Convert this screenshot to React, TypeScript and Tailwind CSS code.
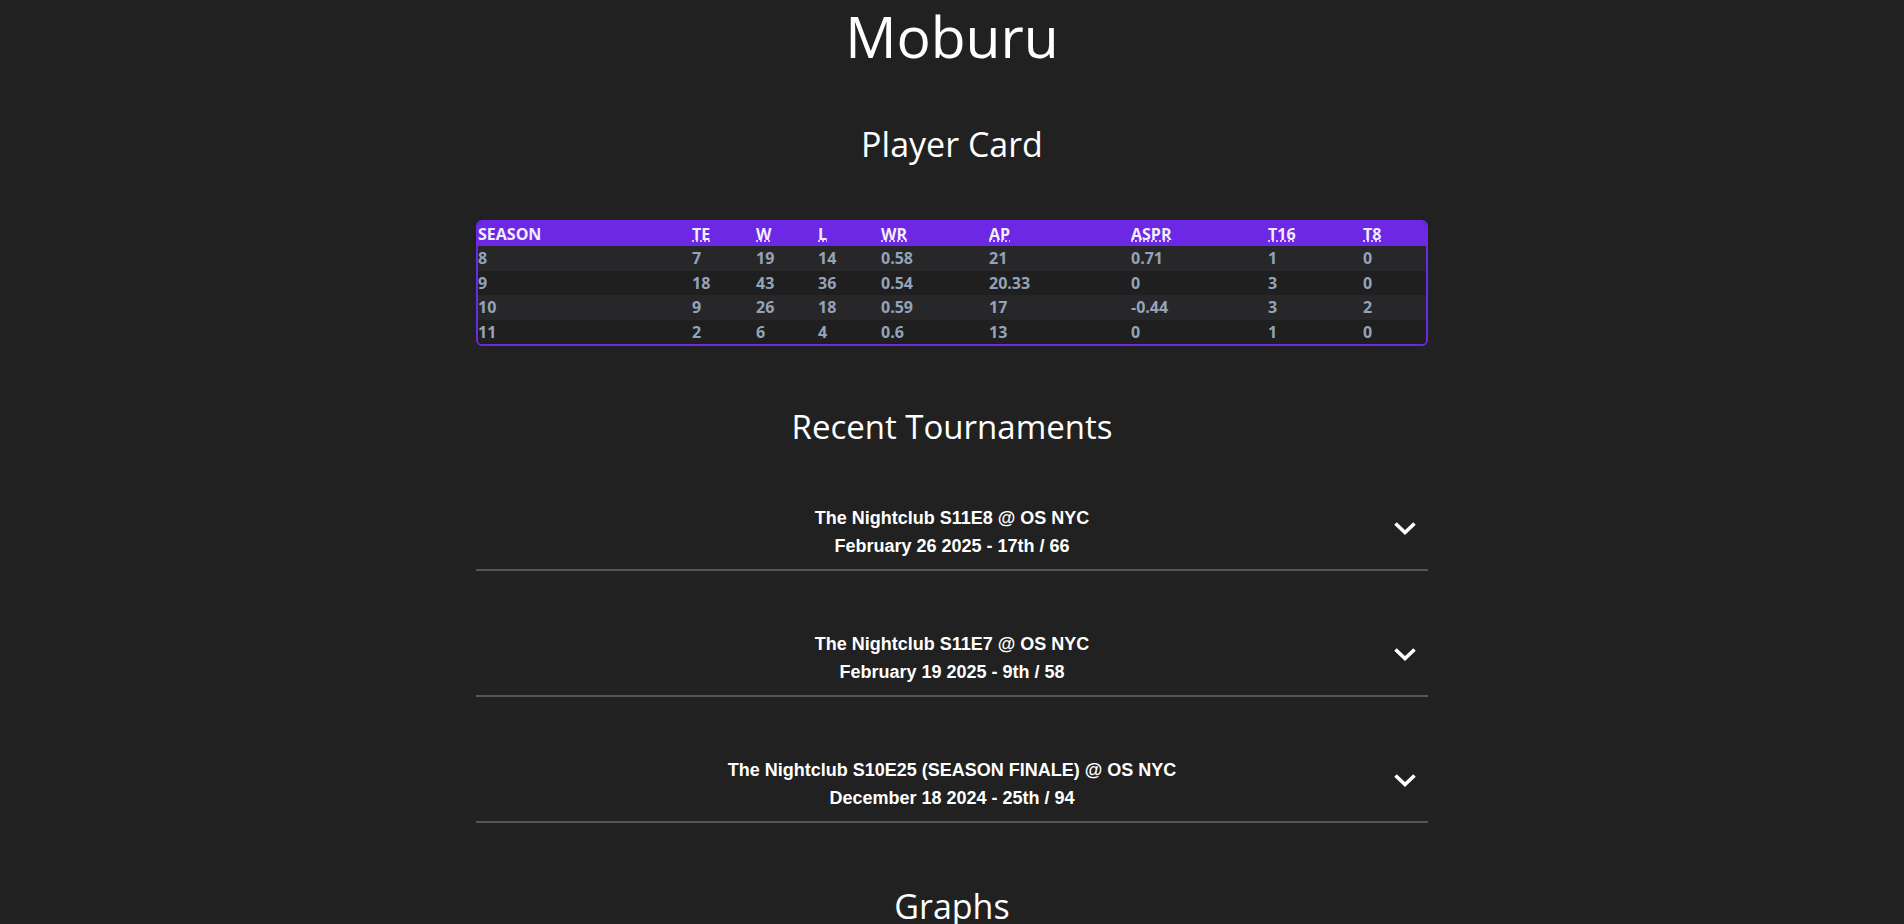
const seasons = [
  { season: "8", te: 7, w: 19, l: 14, wr: "0.58", ap: "21", aspr: "0.71", t16: 1, t8: 0 },
  { season: "9", te: 18, w: 43, l: 36, wr: "0.54", ap: "20.33", aspr: "0", t16: 3, t8: 0 },
  { season: "10", te: 9, w: 26, l: 18, wr: "0.59", ap: "17", aspr: "-0.44", t16: 3, t8: 2 },
  { season: "11", te: 2, w: 6, l: 4, wr: "0.6", ap: "13", aspr: "0", t16: 1, t8: 0 },
];

const columns = [
  { key: "season", label: "SEASON", width: "w-[214px]" },
  { key: "te", label: "TE", title: "Tournaments Entered", width: "w-[64px]" },
  { key: "w", label: "W", title: "Wins", width: "w-[62px]" },
  { key: "l", label: "L", title: "Losses", width: "w-[63px]" },
  { key: "wr", label: "WR", title: "Win Rate", width: "w-[108px]" },
  { key: "ap", label: "AP", title: "Average Placement", width: "w-[142px]" },
  { key: "aspr", label: "ASPR", title: "Average Seed Performance Rating", width: "w-[137px]" },
  { key: "t16", label: "T16", title: "Top 16s", width: "w-[95px]" },
  { key: "t8", label: "T8", title: "Top 8s", width: "w-[63px]" },
] as const;

const tournaments = [
  { name: "The Nightclub S11E8 @ OS NYC", result: "February 26 2025 - 17th / 66" },
  { name: "The Nightclub S11E7 @ OS NYC", result: "February 19 2025 - 9th / 58" },
  { name: "The Nightclub S10E25 (SEASON FINALE) @ OS NYC", result: "December 18 2024 - 25th / 94" },
];

const Chevron = () => (
  <svg width="24" height="14" viewBox="0 0 24 14" fill="none">
    <path d="M2.5 2.5 L12 11.5 L21.5 2.5" stroke="white" strokeWidth="3.6" strokeLinejoin="miter" />
  </svg>
);

const PlayerTable = () => (
  <div className="w-full rounded-md border-2 border-[#6d28e6] overflow-hidden">
    <table className="w-full table-fixed border-collapse font-['Open_Sans',sans-serif] text-[16px] font-bold">
      <thead>
        <tr className="bg-[#6d28e6] h-[24px] text-[#f1eefb]">
          {columns.map((c) => (
            <th key={c.key} className={`${c.width} p-0 text-left leading-none`}>
              {"title" in c ? <abbr title={c.title}>{c.label}</abbr> : c.label}
            </th>
          ))}
        </tr>
      </thead>
      <tbody>
        {seasons.map((s, i) => (
          <tr key={s.season} className={i % 2 === 0 ? "bg-[#27272a] h-[24.5px]" : "bg-[#1f1f1f] h-[24.5px]"}>
            {columns.map((c) => (
              <td key={c.key} className="p-0 text-left leading-none text-[#94a3b8]">
                {s[c.key]}
              </td>
            ))}
          </tr>
        ))}
      </tbody>
    </table>
  </div>
);

export default function App() {
  return (
    <div className="min-h-screen bg-[#212121] text-white font-['Open_Sans',sans-serif]">
      <div className="flex flex-col items-center">
        <h1 className="text-[57px] leading-[62px] font-normal mt-[5px]">Moburu</h1>
        <h2 className="text-[34px] leading-[40px] font-normal mt-[57px]">Player Card</h2>
        <div className="w-1/2 mt-[56px]">
          <PlayerTable />
        </div>
        <h2 className="text-[33px] leading-[40px] font-normal mt-[61px]">Recent Tournaments</h2>
        <div className="w-1/2 -mt-[2px]">
          {tournaments.map((t) => (
            <div key={t.name} className="flex items-center border-b-2 border-[#555555] pt-[63px] pb-[13px]">
              <div className="flex-1 flex flex-col items-center gap-[8px] font-['Liberation_Sans',Arial,sans-serif] font-bold text-[18px] leading-[20px] pl-[35px]">
                <span>{t.name}</span>
                <span>{t.result}</span>
              </div>
              <div className="w-[35px] flex justify-start -translate-y-[4px]">
                <Chevron />
              </div>
            </div>
          ))}
        </div>
        <h2 className="text-[34px] leading-[40px] font-normal mt-[63px] mb-10">Graphs</h2>
      </div>
    </div>
  );
}
